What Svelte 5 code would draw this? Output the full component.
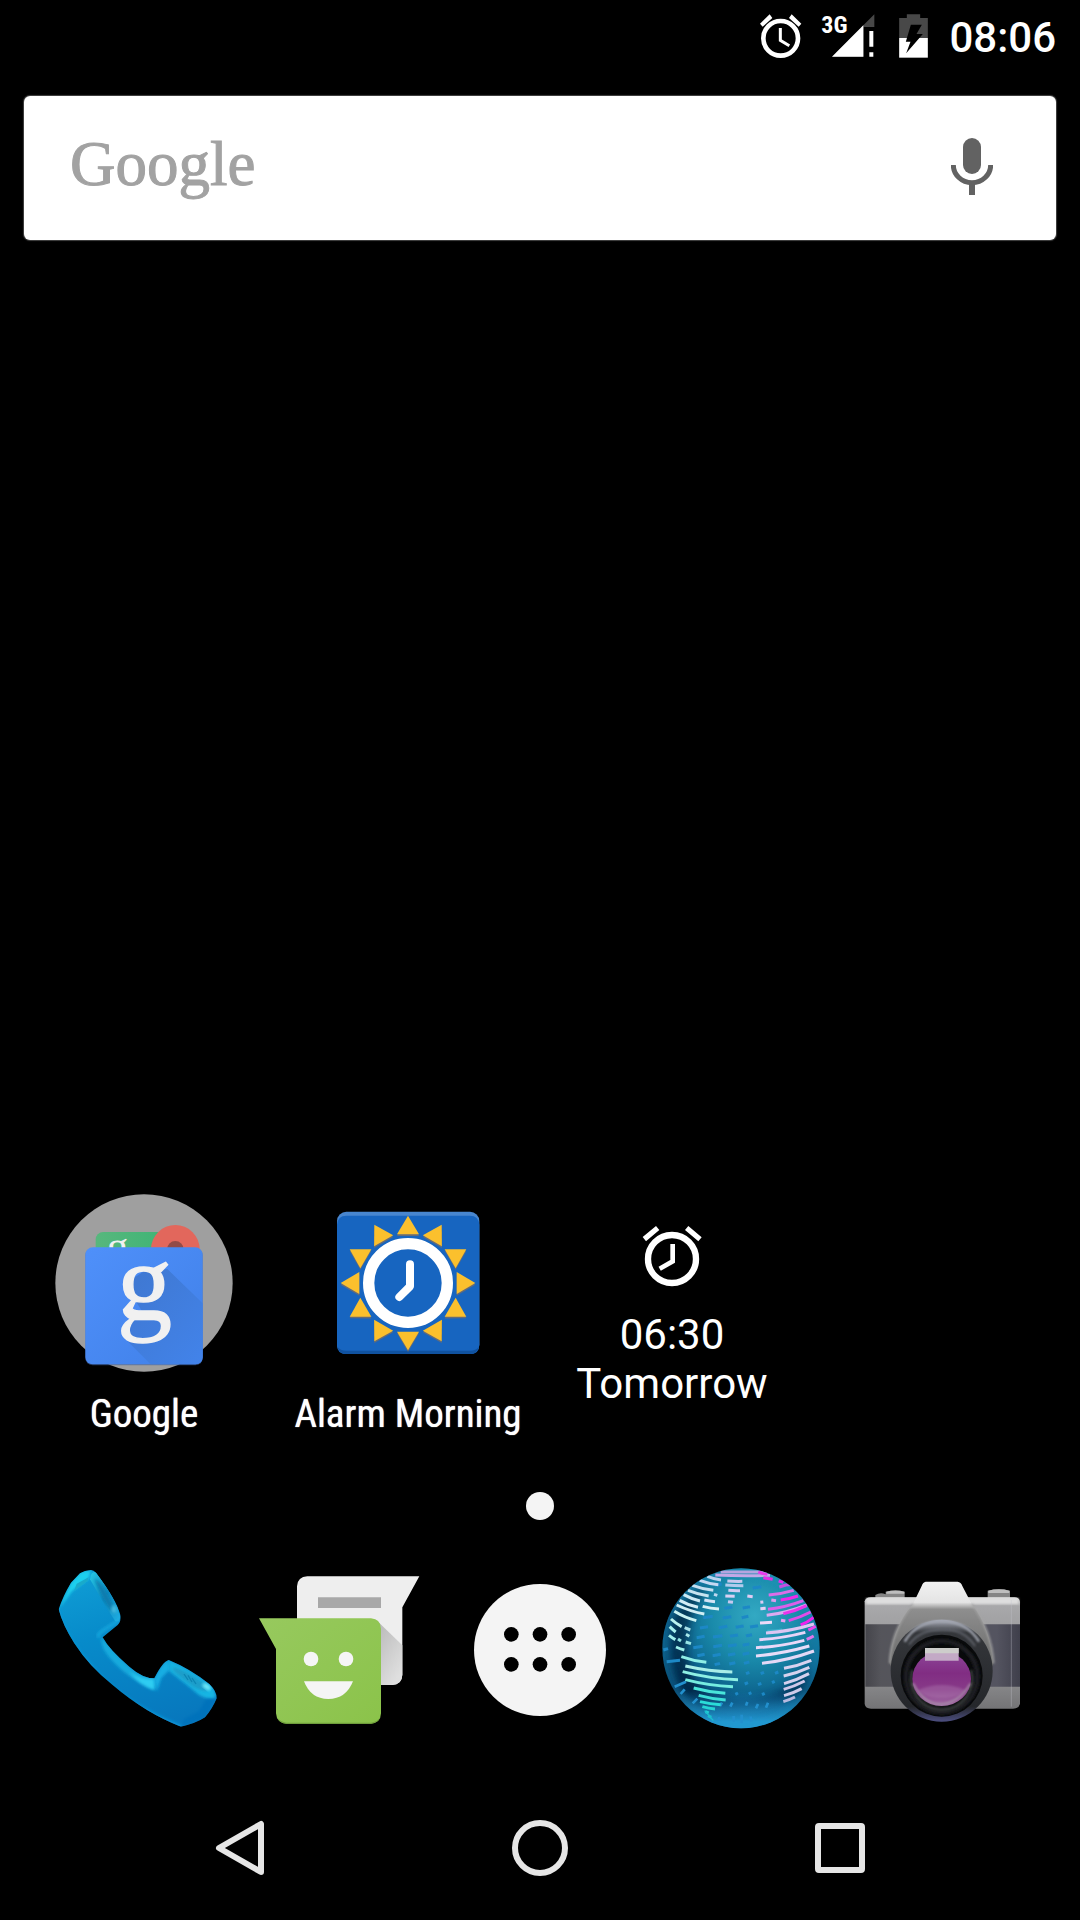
<script>
  const rays = Array.from({ length: 12 }, (_, i) => i * 30);

  // Land stripes on the globe: [x1, y1, x2, y2, bend, colour]
  const land = [
    [212, 66, 352, 66, 0, '#b5a5e0'], [196, 75, 360, 76, 3, '#c3a8e6'],
    [325, 66, 352, 73, 2, '#e83bea'], [340, 83, 368, 88, 0, '#e62fe6'],
    [172, 79, 213, 90, 3, '#b9d3ee'], [149, 91, 205, 104, 4, '#c6d8f2'],
    [127, 106, 190, 121, 4, '#c5dff0'], [114, 121, 176, 138, 4, '#c6e4f0'],
    [101, 134, 150, 153, 4, '#cdeaf4'], [89, 151, 144, 172, 5, '#d3eef6'],
    [80, 165, 163, 192, 6, '#d0eef4'], [73, 184, 139, 212, 6, '#c8f2f2'],
    [63, 207, 95, 230, 3, '#b9f2f0'], [59, 230, 77, 246, 1, '#a8f0ee'],
    [57, 256, 76, 269, 1, '#a2f0ec'], [104, 233, 121, 240, 0, '#a9e0e8'],
    [108, 253, 118, 259, 0, '#a8e8ea'], [84, 267, 93, 273, 0, '#90e5e5'],
    [107, 276, 123, 281, 0, '#98e5e5'], [78, 291, 103, 300, 1, '#9cf0ea'],
    [232, 93, 277, 94, 1, '#c8c9ee'], [226, 105, 280, 107, 1, '#b1cbed'],
    [235, 121, 270, 122, 1, '#d0ccf2'], [226, 138, 254, 139, 0, '#d8d0f4'],
    [292, 138, 308, 140, 0, '#e2ccf4'], [234, 155, 249, 157, 0, '#c6c8f0'],
    [192, 133, 202, 136, 0, '#c0d8f0'], [163, 150, 195, 155, 1, '#d4e4f6'],
    [158, 169, 207, 177, 3, '#d8f0f6'],
    [386, 93, 400, 97, 0, '#ec2bea'], [388, 111, 428, 103, -3, '#c44ee0'],
    [356, 135, 431, 121, 4, '#dc6de8'], [392, 150, 444, 138, 3, '#ee2aea'],
    [364, 150, 378, 152, 0, '#df9bee'], [331, 157, 340, 156, 0, '#dccaf4'],
    [354, 178, 460, 152, 7, '#dc5fea'], [331, 176, 347, 175, 0, '#e4d0f6'],
    [350, 196, 470, 165, 9, '#dcaaf0'], [400, 191, 470, 167, 5, '#ea35ea'],
    [330, 219, 366, 217, 0, '#eedaf8'], [393, 211, 406, 213, 0, '#e6a0f0'],
    [416, 212, 482, 186, 4, '#e24ce8'], [452, 225, 491, 202, 4, '#f022ee'],
    [352, 244, 396, 240, 2, '#3bb0cc'], [348, 249, 492, 222, 9, '#dcc5f2'],
    [475, 240, 497, 229, 1, '#ea45ec'], [328, 269, 466, 247, 7, '#e8d4f8'],
    [470, 268, 491, 258, 1, '#de75ea'], [318, 293, 463, 271, 8, '#ead8f8'],
    [318, 318, 478, 288, 8, '#e8dcf8'], [336, 340, 492, 303, 10, '#e4d8f6'],
    [402, 355, 484, 331, 5, '#d8d2f0'], [401, 378, 478, 352, 5, '#d6d2ee'],
    [402, 401, 477, 371, 5, '#d4d0ee'], [401, 418, 464, 393, 4, '#cec8ea'],
    [402, 437, 455, 416, 4, '#cecbea'], [400, 455, 435, 441, 2, '#b7b9e0'],
    [94, 320, 169, 337, 5, '#8eeee6'], [106, 348, 247, 366, 7, '#a8eee8'],
    [98, 365, 264, 389, 10, '#8ef0e4'], [106, 389, 249, 410, 8, '#74ece0'],
    [131, 414, 226, 430, 5, '#48e6da'], [146, 436, 227, 450, 4, '#3edfd8'],
    [150, 455, 212, 464, 3, '#2cdcd8'], [157, 470, 195, 477, 2, '#25d4d5'],
    [166, 485, 176, 489, 0, '#20cdd2'], [174, 497, 184, 502, 0, '#1cbccb']
  ];

  // Faint ocean dashes: [x, y, length]
  const ocean = [
    [195, 104, 20], [308, 112, 26], [223, 173, 24], [278, 172, 22], [160, 201, 28],
    [218, 202, 26], [275, 201, 20], [150, 232, 24], [206, 231, 26], [257, 230, 24],
    [300, 229, 24], [140, 261, 24], [189, 259, 28], [240, 257, 24], [288, 256, 18],
    [130, 291, 28], [190, 288, 26], [234, 286, 26], [278, 284, 20], [142, 315, 22],
    [188, 315, 24], [234, 313, 22], [278, 311, 20], [194, 342, 16], [238, 340, 18],
    [282, 338, 16], [50, 333, 40], [40, 298, 14], [288, 369, 10], [332, 369, 10],
    [375, 368, 10], [284, 400, 10], [324, 402, 10], [366, 396, 8], [256, 431, 8],
    [296, 430, 8], [336, 432, 8]
  ];
</script>

<main>
  <header>
    <svg class="alarm-icon" viewBox="0 0 126 132" role="img" aria-label="Alarm set">
      <circle cx="62" cy="73" r="52" fill="none" stroke="#fff" stroke-width="14" />
      <path d="M0 29 29 1 37 12 8 38ZM95 1 124 29 116 38 87 12Z" fill="#fff" />
      <path d="M61 42V79L88 95" fill="none" stroke="#fff" stroke-width="9" />
    </svg>
    <svg class="signal" viewBox="0 0 159 132" role="img" aria-label="3G signal">
      <path d="M30 128 157 1V39H125V128Z" fill="#484848" />
      <path d="M30 128 124 34V128Z" fill="#fff" />
      <path d="M142 51H154V98H142ZM142 115H154V128H142Z" fill="#fff" />
      <text x="-2" y="58">3G</text>
    </svg>
    <svg class="battery" viewBox="0 0 86 132" role="img" aria-label="Battery charging">
      <path d="M23 1H63V12H86V72H0V12H23Z" fill="#484848" />
      <path d="M0 72H86V131H0Z" fill="#fff" />
      <path d="M35 32H68L52 60H71L21 118 34 83H20Z" fill="#000" />
    </svg>
    <time>08:06</time>
  </header>

  <div class="search">
    <button class="wordmark">Google</button>
    <button class="mic" aria-label="Voice search">
      <svg viewBox="0 0 126 171">
        <rect x="36" width="54" height="108" rx="27" fill="#626262" />
        <path d="M7 81A56 53 0 0 0 119 81" fill="none" stroke="#626262" stroke-width="15" />
        <path d="M54 135H72V171H54Z" fill="#626262" />
      </svg>
    </button>
  </div>

  <section class="shortcuts">
    <button class="shortcut">
      <svg viewBox="-84 0 792 600" aria-hidden="true">
        <defs>
          <linearGradient id="blue" x2="1" y2="1">
            <stop offset="0" stop-color="#4f90fa" /><stop offset="1" stop-color="#4080e8" />
          </linearGradient>
          <linearGradient id="green" x2="1"><stop stop-color="#57b77d" /><stop offset="1" stop-color="#36b373" /></linearGradient>
          <linearGradient id="shade" x2="1" y2="1">
            <stop stop-color="#3f77cf" /><stop offset="1" stop-color="#4283ea" />
          </linearGradient>
          <clipPath id="green-top"><path d="M160 140H500V205H160Z" /></clipPath>
        </defs>
        <circle cx="312" cy="309" r="266" fill="#9f9f9f" />
        <rect x="167" y="156" width="290" height="100" rx="22" fill="url(#green)" />
        <g clip-path="url(#green-top)"><text class="g-small" x="200" y="244">g</text></g>
        <circle cx="406" cy="208" r="73" fill="#e2675c" />
        <circle cx="406" cy="208" r="25" fill="#924b47" />
        <rect x="136" y="204" width="352" height="352" rx="22" fill="#3c5e9b" opacity=".6" />
        <rect x="136" y="202" width="352" height="351" rx="22" fill="url(#blue)" />
        <path d="M382 267 488 370V531Q488 553 466 553H332L262 483 250 440 310 400 272 340 272 300 310 275Z" fill="url(#shade)" />
        <text class="g-large" x="231" y="420">g</text>
      </svg>
      <span>Google</span>
    </button>

    <button class="shortcut">
      <svg viewBox="-12 0 792 600" aria-hidden="true">
        <rect x="171" y="95" width="427" height="427" rx="28" fill="#4886cf" />
        <path d="M171 134Q173 107 199 107H570Q596 107 598 134V494Q598 522 570 522H199Q171 522 171 494Z" fill="#1765c0" />
        <path d="M172 500Q178 522 199 522H570Q592 522 597 500 588 512 570 512H199Q181 512 172 500Z" fill="#1052a0" />
        {#each rays as angle}
          <path d="M384 107 417 163H351Z" fill="#9a7048" opacity=".6" transform="translate(0 5) rotate({angle} 384 309)" />
        {/each}
        {#each rays as angle}
          <path d="M384 107 417 163H351Z" fill="#fbc02d" transform="rotate({angle} 384 309)" />
        {/each}
        <circle cx="384" cy="309" r="118" fill="none" stroke="#fff" stroke-width="34" />
        <path d="M390 253V319L358 351" fill="none" stroke="#fff" stroke-width="24" stroke-linecap="round" stroke-linejoin="round" />
      </svg>
      <span>Alarm Morning</span>
    </button>

    <button class="widget">
      <svg viewBox="-60 -60 792 360" aria-hidden="true" fill="#fff">
        <path d="M248 111 288 78 298 90 258 124ZM385 78 425 112 415 124 375 90Z" />
        <circle cx="336" cy="177" r="72" fill="none" stroke="#fff" stroke-width="19" />
        <path d="M338 132V184L299 206" fill="none" stroke="#fff" stroke-width="14" />
      </svg>
      <span>06:30</span>
      <span>Tomorrow</span>
    </button>
  </section>

  <div class="page-dot"></div>

  <section class="dock">
    <button aria-label="Phone">
      <svg viewBox="-7 0 600 600">
        <defs>
          <linearGradient id="phone" x1=".2" x2=".5" y2="1">
            <stop stop-color="#109fd6" /><stop offset=".4" stop-color="#078bca" /><stop offset="1" stop-color="#0777bd" />
          </linearGradient>
          <linearGradient id="rim" x1="0" x2="1" y2="1"><stop stop-color="#27c9e6" /><stop offset=".5" stop-color="#0d86bd" /><stop offset="1" stop-color="#1fb0e4" /></linearGradient>
          <filter id="soft"><feGaussianBlur stdDeviation="5" /></filter>
          <clipPath id="handset"><path d="M155 60Q136 61 122 70L95 98Q70 140 58 178 70 225 105 280 150 350 220 405 320 490 425 530 470 520 497 502 520 475 532 445 533 425 510 402 450 355 388 330 370 335 345 385 310 385 270 350 210 300 190 262L235 225Q246 215 243 195 232 150 170 68 163 60 155 60Z" /></clipPath>
        </defs>
        <g clip-path="url(#handset)">
          <path d="M40 40H560V560H40Z" fill="url(#phone)" />
          <path d="M58 178 95 98 125 66 155 60 148 86 98 124Z" fill="#1fd0ee" filter="url(#soft)" />
          <path d="M104 122 112 101 148 82 144 94Z" fill="#19aacb" />
          <path d="M152 88Q155 60 172 68 232 150 243 200 240 218 228 214 205 180 152 88Z" fill="url(#rim)" />
          <path d="M166 88Q182 86 222 168 232 190 220 188 195 160 166 88Z" fill="#087cad" filter="url(#soft)" />
          <path d="M188 262Q182 270 194 300 240 372 345 420L350 392 345 383Q290 378 240 320 205 285 188 262Z" fill="#16aadd" filter="url(#soft)" />
          <path d="M270 365Q300 388 345 388L345 420Q300 405 270 365Z" fill="#2fcdf2" filter="url(#soft)" />
          <path d="M180 262Q170 256 190 242L240 210" fill="none" stroke="#19a9df" stroke-width="8" filter="url(#soft)" />
          <path d="M345 385Q370 335 388 330L392 358 366 384 352 425Z" fill="#13aee3" filter="url(#soft)" />
          <path d="M388 330Q450 355 510 402 536 425 526 446 505 450 478 434 425 390 390 364Z" fill="#18b5e3" filter="url(#soft)" />
          <path d="M400 350Q440 360 498 402 512 416 502 422 486 424 462 410 420 380 402 362Z" fill="#1b9dc9" filter="url(#soft)" />
          <path d="M434 372 446 390M446 376 458 396M458 384 470 402" stroke="#0b86b5" stroke-width="4" />
          <ellipse cx="502" cy="410" rx="14" ry="8" fill="#6ce9fa" transform="rotate(35 502 410)" filter="url(#soft)" />
          <ellipse cx="224" cy="178" rx="8" ry="12" fill="#42bbe2" filter="url(#soft)" />
          <path d="M532 446 498 504 425 530 434 508 478 484 500 448Z" fill="#0672bb" filter="url(#soft)" />
          <path d="M58 178Q80 270 150 340 230 450 425 530" fill="none" stroke="#0a97d8" stroke-width="9" filter="url(#soft)" />
        </g>
      </svg>
    </button>

    <button aria-label="Messages">
      <svg viewBox="-6 0 600 600">
        <defs>
          <linearGradient id="leaf" x2="1" y2="1"><stop stop-color="#97c95e" /><stop offset="1" stop-color="#8bc34a" /></linearGradient>
          <linearGradient id="cast" x1="0" y1="0" x2=".6" y2="1"><stop stop-color="#b9b9b9" /><stop offset="1" stop-color="#dfdfdf" /></linearGradient>
        </defs>
        <path d="M171 109Q173 80 202 79H538L487 172V374Q486 404 456 405H171Z" fill="#eee" />
        <path d="M415 216 487 286V374Q486 404 456 405H415Z" fill="url(#cast)" />
        <path d="M234 142H423V174H234Z" fill="#a8a8a8" />
        <path d="M57 205H393Q422 207 423 236V490Q422 519 393 521H139Q110 519 108 490V297Z" fill="url(#leaf)" />
        <path d="M111 502Q119 521 139 521H393Q413 520 421 502 411 517 393 518H139Q121 517 111 502Z" fill="#70a03c" />
        <circle cx="213" cy="327" r="22" fill="#f5f5f5" /><circle cx="318" cy="327" r="22" fill="#f5f5f5" />
        <path d="M192 394H339Q318 447 265 447T192 394Z" fill="#f5f5f5" />
      </svg>
    </button>

    <button aria-label="All apps">
      <svg viewBox="0 0 600 600">
        <circle cx="300" cy="300" r="198" fill="#f4f4f4" />
        {#each [214, 300, 386] as x}
          <circle cx={x} cy="253" r="22" /><circle cx={x} cy="343" r="22" />
        {/each}
      </svg>
    </button>

    <button aria-label="Browser">
      <svg viewBox="-24 0 600 600">
        <defs>
          <radialGradient id="sea" cx=".58" cy=".3" r=".75">
            <stop stop-color="#33a9c3" /><stop offset=".35" stop-color="#1a8bab" /><stop offset=".7" stop-color="#0a5c88" /><stop offset="1" stop-color="#052d4e" />
          </radialGradient>
          <linearGradient id="glow" x2="0" y2="1"><stop offset=".76" stop-color="#1f8cc6" stop-opacity="0" /><stop offset=".95" stop-color="#2398d2" /></linearGradient>
          <filter id="haze"><feGaussianBlur stdDeviation="12" /></filter>
          <filter id="edge"><feGaussianBlur stdDeviation="1" /></filter>
          <clipPath id="sphere"><ellipse cx="273" cy="295" rx="236" ry="240" /></clipPath>
        </defs>
        <g clip-path="url(#sphere)">
          <path d="M30 50H520V540H30Z" fill="url(#sea)" />
          <path d="M60 200Q120 120 170 110 120 180 110 280 110 400 190 480L120 450Q50 380 60 200Z" fill="#031f38" opacity=".65" filter="url(#haze)" />
          <path d="M70 320Q120 430 270 456 420 440 480 350 490 430 440 450 300 480 160 480 80 430 70 320Z" fill="#04294e" opacity=".7" filter="url(#haze)" />
          <path d="M30 50H520V540H30Z" fill="url(#glow)" />
          <ellipse cx="273" cy="295" rx="232" ry="236" fill="none" stroke="#209bcb" stroke-width="13" opacity=".6" filter="url(#haze)" />
          <g filter="url(#edge)">
            {#each ocean as [x, y, length]}
              <path d="M{x} {y + 2}L{x + length} {y - 2}" stroke="#1c88c6" stroke-width="9" />
            {/each}
            <path d="M74 410 108 395M92 432 104 418M128 460 142 446M210 468 216 458M241 470 247 458M288 467 292 456M318 475 324 462M348 473 354 458M251 515V498M275 520V494M304 515 302 500M206 512 208 502" stroke="#2490ce" stroke-width="8" />
            {#each land as [x1, y1, x2, y2, bend, colour]}
              <path d="M{x1} {y1}Q{(x1 + x2) / 2} {(y1 + y2) / 2 + bend} {x2} {y2}" fill="none" stroke={colour} stroke-width="9" />
            {/each}
          </g>
          <path d="M164 482 190 512" stroke="#19bfd0" stroke-width="4" />
        </g>
      </svg>
    </button>

    <button aria-label="Camera">
      <svg viewBox="-20 -30 600 600">
        <defs>
          <linearGradient id="metal" x2="0" y2="1"><stop stop-color="#ddd" /><stop offset=".08" stop-color="#a8a8aa" /><stop offset=".75" stop-color="#8a8a8c" /><stop offset="1" stop-color="#747476" /></linearGradient>
          <linearGradient id="hump" x2="0" y2="1"><stop stop-color="#f2f2f2" /><stop offset=".18" stop-color="#e4e4e4" /><stop offset=".24" stop-color="#8e8e8e" /><stop offset="1" stop-color="#555" /></linearGradient>
          <linearGradient id="grip" x2="1"><stop stop-color="#45454b" /><stop offset=".1" stop-color="#55555b" /><stop offset=".85" stop-color="#545460" /><stop offset="1" stop-color="#3f3f4b" /></linearGradient>
          <linearGradient id="barrel" x2="0" y2="1"><stop stop-color="#a9adb8" /><stop offset=".13" stop-color="#34363a" /><stop offset=".85" stop-color="#25272b" /><stop offset="1" stop-color="#4c4e80" /></linearGradient>
          <linearGradient id="glass" x2="0" y2="1"><stop stop-color="#8d4699" /><stop offset=".4" stop-color="#812d83" /><stop offset=".7" stop-color="#873a88" /><stop offset="1" stop-color="#a26ca4" /></linearGradient>
          <filter id="blur"><feGaussianBlur stdDeviation="3" /></filter>
        </defs>
        <path d="M77 105Q92 96 108 103V95Q138 88 165 95V116H77ZM414 92Q448 84 481 92V118H414Z" fill="#858585" />
        <path d="M110 95Q138 88 164 95V101H110ZM416 92Q448 84 479 92V99H416Z" fill="#bebebe" />
        <path d="M45 124Q48 112 64 112H494Q510 113 511 126V432Q507 446 490 446H64Q47 446 45 432Z" fill="url(#metal)" />
        <path d="M50 114H506V132H50Z" fill="#dedede" filter="url(#blur)" />
        <path d="M47 193H511V380H47Z" fill="url(#grip)" />
        <path d="M485 120V440" stroke="#c5c5ce" stroke-width="3" opacity=".35" />
        <path d="M228 65H324Q334 66 338 78L366 132Q425 210 432 310L380 410H170L119 310Q124 210 190 132L216 78Q220 66 228 65Z" fill="url(#hump)" />
        <path d="M190 132Q124 210 120 310M366 132Q425 210 432 310" fill="none" stroke="#a5a5a5" stroke-width="5" filter="url(#blur)" />
        <ellipse cx="276" cy="332" rx="153" ry="153" fill="url(#barrel)" />
        <path d="M165 245Q200 184 276 184T388 245" fill="none" stroke="#a5a9b4" stroke-width="7" filter="url(#blur)" />
        <path d="M178 254Q210 210 276 208T376 258" fill="none" stroke="#5d6068" stroke-width="6" filter="url(#blur)" />
        <circle cx="276" cy="347" r="123" fill="#090a0b" />
        <circle cx="276" cy="350" r="107" fill="none" stroke="#1c1f20" stroke-width="14" filter="url(#blur)" />
        <path d="M188 330A92 92 0 1 0 364 330" fill="none" stroke="#343938" stroke-width="9" filter="url(#blur)" />
        <ellipse cx="276" cy="356" rx="88" ry="82" fill="url(#glass)" />
        <path d="M190 370Q225 436 276 432T363 370" fill="none" stroke="#a994aa" stroke-width="5" filter="url(#blur)" />
        <path d="M206 390Q276 360 346 390 330 414 276 414T206 390Z" fill="#b685b8" opacity=".35" filter="url(#blur)" />
        <path d="M226 264H327V302H226Z" fill="#c3a9c6" />
        <path d="M226 264H327V280H226Z" fill="#cdcdcb" />
      </svg>
    </button>
  </section>

  <nav>
    <button aria-label="Back">
      <svg viewBox="0 0 60 60"><path d="M51 6V54L9 30Z" /></svg>
    </button>
    <button aria-label="Home">
      <svg viewBox="0 0 60 60"><circle cx="30" cy="30" r="25" /></svg>
    </button>
    <button aria-label="Recent apps">
      <svg viewBox="0 0 60 60"><rect x="8" y="8" width="44" height="44" rx="1" /></svg>
    </button>
  </nav>
</main>

<style>
  :global(body) {
    background: #000;
  }

  main {
    display: flex;
    flex-direction: column;
    min-height: 100vh;
    background: #000;
    color: #fff;
    font-family: Roboto, sans-serif;
  }

  button {
    padding: 0;
    border: 0;
    background: none;
    color: inherit;
    font: inherit;
    cursor: pointer;
  }

  svg {
    display: block;
  }

  header {
    display: flex;
    align-items: center;
    justify-content: flex-end;
    height: 72px;
    padding-right: 24px;
  }

  .alarm-icon {
    width: 42px;
    height: 44px;
    margin-right: 20px;
  }

  .signal {
    width: 53px;
    height: 44px;
    margin-right: 24px;
    overflow: visible;
  }

  .signal text {
    fill: #fff;
    font: 700 72px 'Roboto Condensed', 'Liberation Sans Narrow', Roboto, sans-serif;
  }

  .battery {
    width: 29px;
    height: 44px;
    margin-right: 21px;
  }

  time {
    padding-top: 4px;
    font-size: 42px;
    font-weight: 500;
    line-height: 48px;
  }

  .search {
    display: flex;
    align-items: flex-start;
    justify-content: space-between;
    height: 144px;
    margin: 24px 24px 0;
    border-radius: 6px;
    background: #fff;
    box-shadow: 0 0 1px 1px #444;
  }

  .wordmark {
    padding: 20px 0 0 46px;
    color: #a2a2a2;
    font-family: 'Liberation Serif', serif;
    font-size: 63px;
    line-height: 96px;
    -webkit-text-stroke: 1px #a2a2a2;
  }

  .mic {
    padding: 42px 63px;
  }

  .mic svg {
    width: 42px;
    height: 57px;
  }

  .shortcuts {
    display: grid;
    grid-template-columns: repeat(4, 1fr);
    align-items: start;
    margin-top: auto;
    padding: 0 12px;
  }

  .shortcut,
  .widget {
    display: flex;
    flex-direction: column;
    align-items: center;
    gap: 10px;
  }

  .shortcut svg {
    width: 100%;
    height: 200px;
  }

  .shortcut span {
    font-family: 'Roboto Condensed', 'Liberation Sans Narrow', Roboto, sans-serif;
    font-size: 39px;
    line-height: 48px;
    white-space: nowrap;
    text-shadow: 0 0 1px #fff;
  }

  .g-small,
  .g-large {
    fill: #f1f1f1;
    font-family: 'Liberation Serif', serif;
  }

  .g-small {
    font-size: 130px;
  }

  .g-large {
    font-size: 330px;
    stroke: #f1f1f1;
    stroke-width: 4px;
  }

  .widget {
    gap: 0;
    font-size: 42px;
    line-height: 49px;
  }

  .widget svg {
    width: 100%;
    height: 120px;
    margin-bottom: 10px;
  }

  .page-dot {
    align-self: center;
    width: 28px;
    height: 28px;
    margin: 54px 0 30px;
    border-radius: 50%;
    background: #f4f4f4;
  }

  .dock {
    display: grid;
    grid-template-columns: repeat(5, 1fr);
    justify-items: center;
    padding: 0 36px 26px;
  }

  .dock svg {
    width: 200px;
    height: 200px;
  }

  nav {
    display: grid;
    grid-template-columns: repeat(3, 1fr);
    height: 144px;
    padding: 0 90px;
  }

  nav button {
    display: flex;
    align-items: center;
    justify-content: center;
  }

  nav svg {
    width: 60px;
    height: 60px;
    fill: none;
    stroke: #e6e6e6;
    stroke-width: 6;
    stroke-linejoin: round;
  }
</style>
